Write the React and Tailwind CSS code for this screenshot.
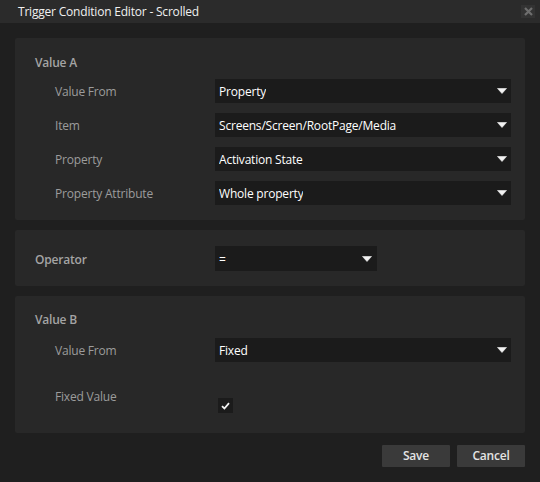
import { useState } from "react";

const font = { fontFamily: '"Open Sans", "Noto Sans", Arial, sans-serif' };

const Caret = () => (
  <svg width="10" height="6" viewBox="0 0 10 6" className="shrink-0">
    <path d="M0.5 0.5 H9.5 L5 5.5 Z" fill="#f2f2f2" stroke="#f2f2f2" strokeWidth="0.6" strokeLinejoin="round" />
  </svg>
);

const Select = ({ value, className = "" }) => (
  <div className={`flex items-center justify-between bg-[#1b1b1b] pl-[4px] pr-[4px] text-[12px] text-white ${className}`}>
    <span className="truncate pt-[2px]">{value}</span>
    <Caret />
  </div>
);

const Row = ({ label, value }) => (
  <div className="flex items-center pl-[20px]">
    <div className="w-[160px] pt-[2px] text-[12px] text-[#9c9c9c]">{label}</div>
    <Select value={value} className="h-[24px] flex-1" />
  </div>
);

const Panel = ({ children, className = "" }) => (
  <div className={`rounded-[2px] bg-[#282828] pl-[20px] pr-[14px] ${className}`}>{children}</div>
);

const Heading = ({ children }) => (
  <div className="h-[16px] pt-[1px] text-[12px] font-semibold leading-[16px] text-[#a4a4a4]">{children}</div>
);

export default function App() {
  const [checked, setChecked] = useState(true);

  return (
    <div className="flex h-[482px] w-[540px] flex-col bg-[#1f1f1f] tracking-[-0.2px]" style={font}>
      {/* title bar */}
      <div className="flex h-[23px] items-center justify-between bg-[#2b2b2b] pl-[18px] pr-[5px]">
        <span className="pt-[1px] text-[12px] text-[#f0f0f0]">Trigger Condition Editor - Scrolled</span>
        <div className="flex h-[13px] w-[14px] items-center justify-center bg-[#333333]">
          <svg width="9" height="9" viewBox="0 0 9 9">
            <path d="M1 1 L8 8 M8 1 L1 8" stroke="#6e6e6e" strokeWidth="2.2" />
          </svg>
        </div>
      </div>

      <div className="flex flex-col gap-[10px] px-[15px] pt-[15px]">
        {/* Value A */}
        <Panel className="pt-[16px] pb-[15px]">
          <Heading>Value A</Heading>
          <div className="mt-[9px] flex flex-col gap-[10px]">
            <Row label="Value From" value="Property" />
            <Row label="Item" value="Screens/Screen/RootPage/Media" />
            <Row label="Property" value="Activation State" />
            <Row label="Property Attribute" value="Whole property" />
          </div>
        </Panel>

        {/* Operator */}
        <Panel className="flex items-center pt-[16px] pb-[15px]">
          <div className="w-[180px]">
            <Heading>Operator</Heading>
          </div>
          <Select value="=" className="h-[25px] w-[162px] pr-[5px]" />
        </Panel>

        {/* Value B */}
        <Panel className="pt-[15px] pb-[20px]">
          <Heading>Value B</Heading>
          <div className="mt-[11px]">
            <Row label="Value From" value="Fixed" />
          </div>
          <div className="mt-[26px] flex items-start pl-[20px]">
            <div className="w-[160px] pt-[1px] text-[12px] leading-[16px] text-[#9c9c9c]">Fixed Value</div>
            <button
              onClick={() => setChecked(!checked)}
              className="ml-[3px] mt-[10px] flex h-[15px] w-[15px] items-center justify-center bg-[#1b1b1b]"
            >
              {checked && (
                <svg width="9" height="8" viewBox="0 0 9 8">
                  <path d="M1 4.2 L3.4 6.5 L8 1.2" fill="none" stroke="#f2f2f2" strokeWidth="1.8" />
                </svg>
              )}
            </button>
          </div>
        </Panel>

        {/* actions */}
        <div className="mt-[2px] flex justify-end gap-[7px]">
          <button className="h-[22px] w-[68px] rounded-[1px] bg-[#3a3a3a] text-[12px] font-semibold text-[#e4e4e4]">Save</button>
          <button className="h-[22px] w-[68px] rounded-[1px] bg-[#3a3a3a] text-[12px] font-semibold text-[#e4e4e4]">Cancel</button>
        </div>
      </div>
    </div>
  );
}
